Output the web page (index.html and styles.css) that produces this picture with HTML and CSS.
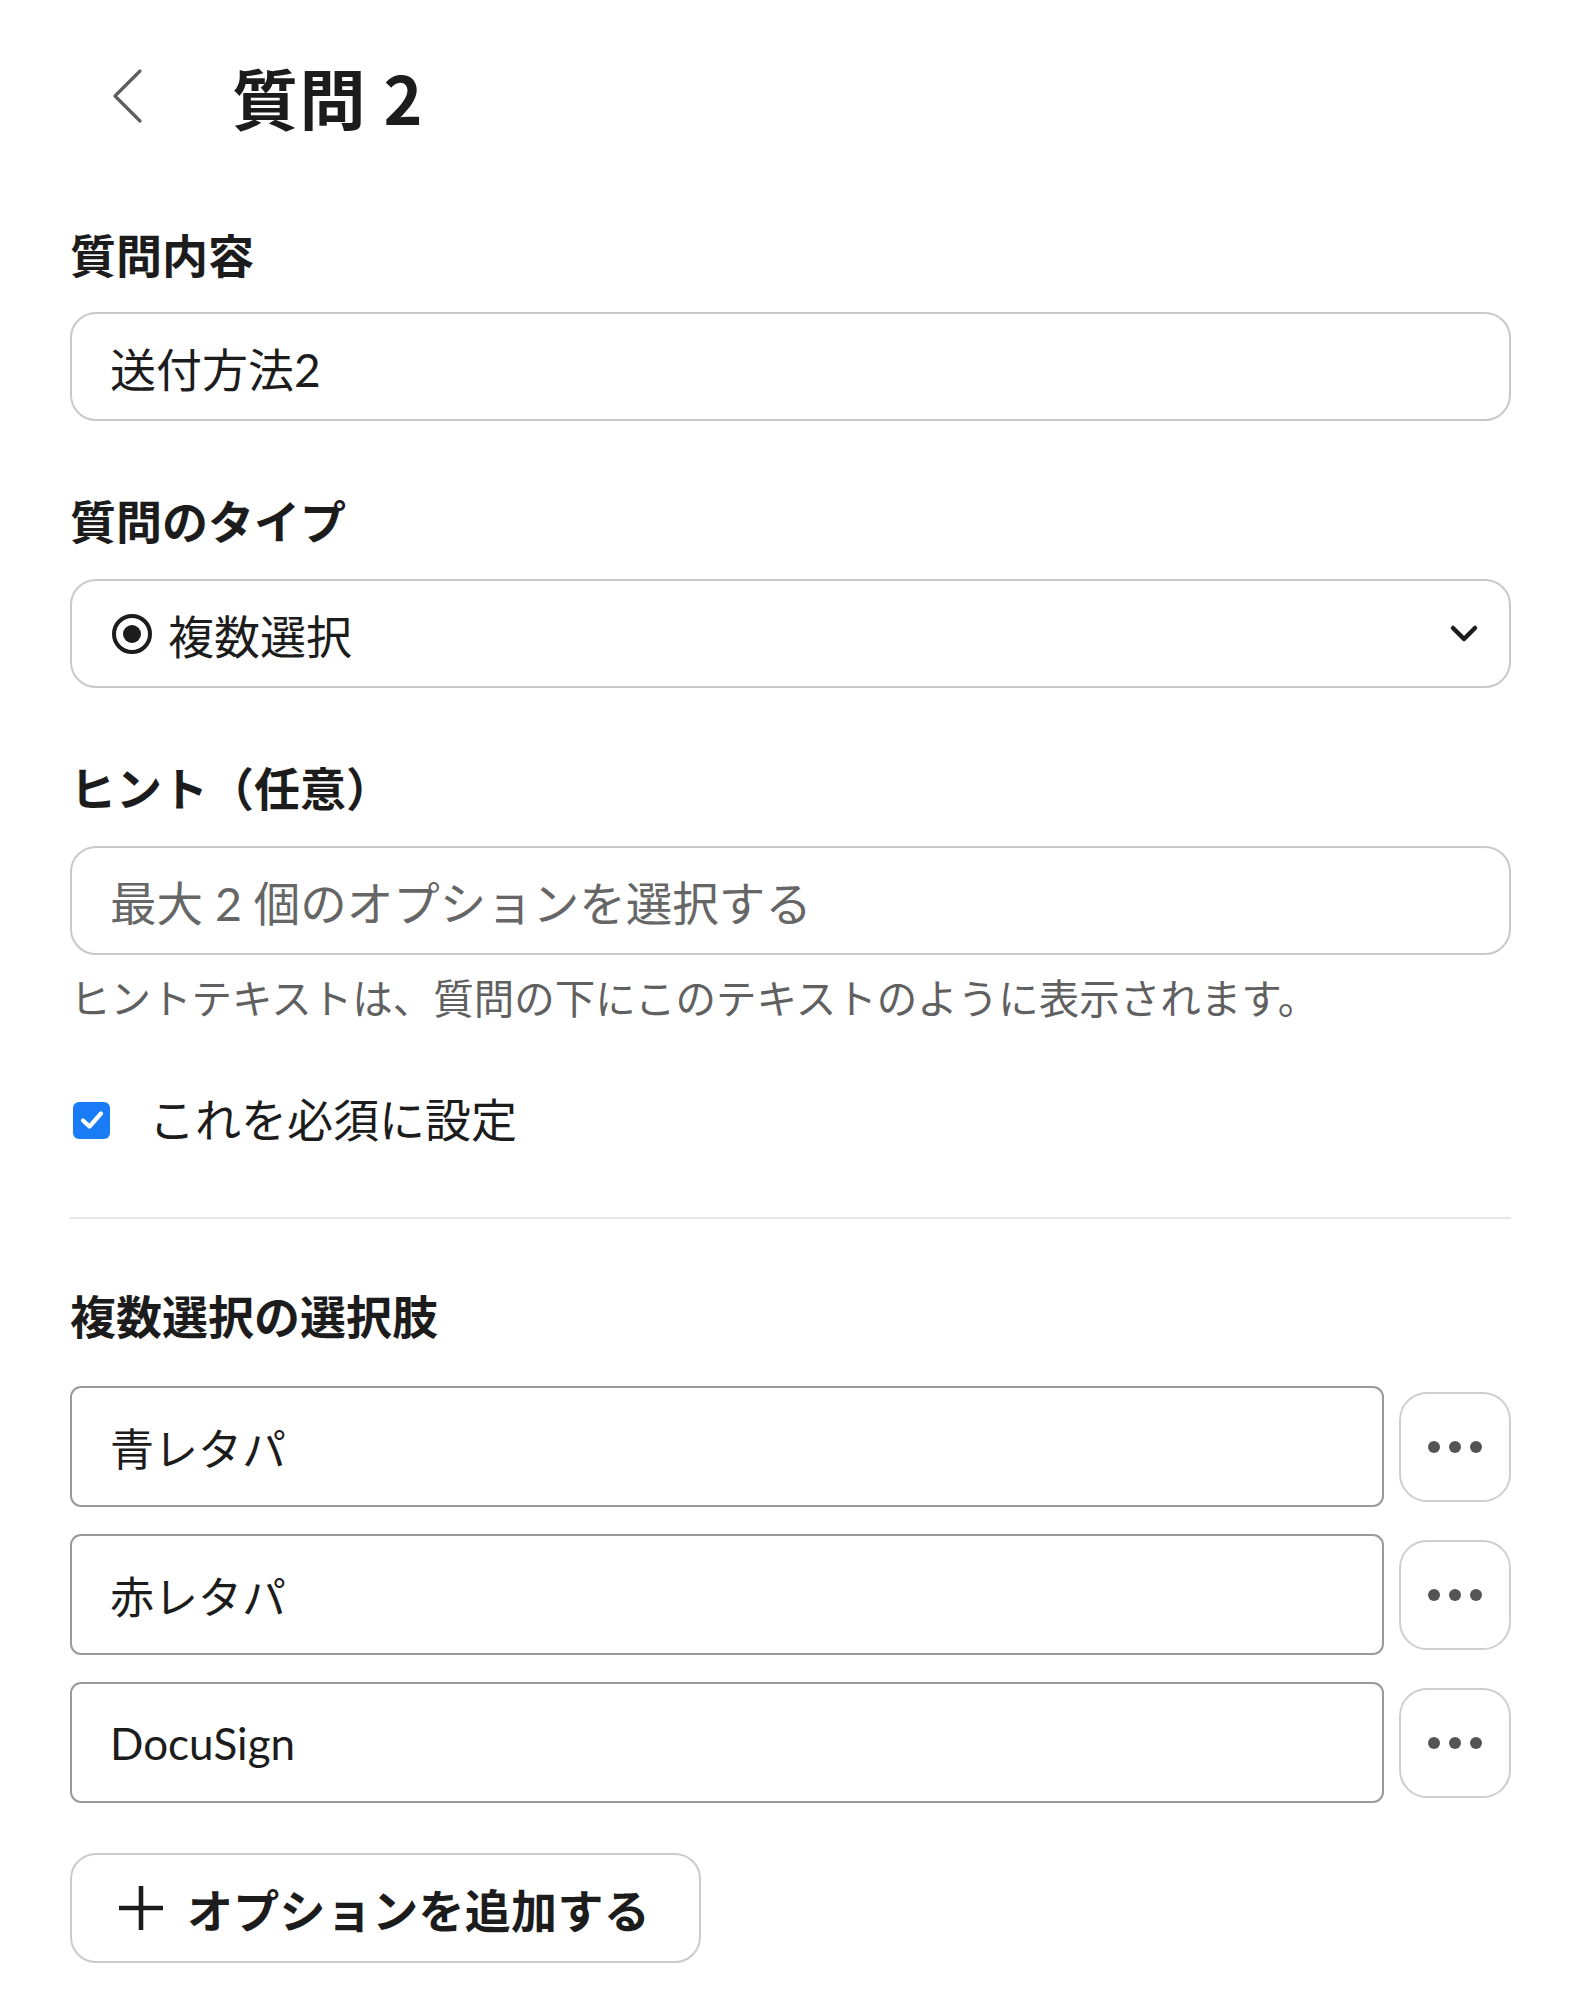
FILE: index.html
```html
<!DOCTYPE html>
<html lang="ja">
<head>
<meta charset="utf-8">
<title>質問 2</title>
<link rel="stylesheet" href="styles.css">
</head>
<body>
<header class="header">
  <button class="back" aria-label="戻る">
    <svg width="34" height="56" viewBox="0 0 34 56"><path d="M30 3 L5 28 L30 53" fill="none" stroke="#5e5e5e" stroke-width="3.2" stroke-linecap="round" stroke-linejoin="round"/></svg>
  </button>
  <h1 class="title">質問 2</h1>
</header>
<main class="content">
  <div class="label label-first">質問内容</div>
  <div class="field field-input">送付方法2</div>

  <div class="label">質問のタイプ</div>
  <div class="field field-select">
    <span class="radio"><span class="radio-dot"></span></span>
    <span class="select-text">複数選択</span>
    <svg class="chev" width="30" height="22" viewBox="0 0 30 22"><path d="M4 5 L15 16 L26 5" fill="none" stroke="#1d1c1d" stroke-width="4.5" stroke-linecap="round" stroke-linejoin="round"/></svg>
  </div>

  <div class="label">ヒント（任意）</div>
  <div class="field field-input placeholder">最大 2 個のオプションを選択する</div>
  <div class="help">ヒントテキストは、質問の下にこのテキストのように表示されます。</div>

  <div class="check-row">
    <span class="checkbox">
      <svg width="24" height="20" viewBox="0 0 24 20"><path d="M3 10.5 L9.5 16.5 L21 3.5" fill="none" stroke="#fff" stroke-width="4.2" stroke-linecap="round" stroke-linejoin="round"/></svg>
    </span>
    <span class="check-label">これを必須に設定</span>
  </div>

  <hr class="divider">

  <div class="label label-options">複数選択の選択肢</div>
  <div class="options">
    <div class="option-row">
      <div class="option-input">青レタパ</div>
      <button class="more" aria-label="その他"><span></span><span></span><span></span></button>
    </div>
    <div class="option-row">
      <div class="option-input">赤レタパ</div>
      <button class="more" aria-label="その他"><span></span><span></span><span></span></button>
    </div>
    <div class="option-row">
      <div class="option-input">DocuSign</div>
      <button class="more" aria-label="その他"><span></span><span></span><span></span></button>
    </div>
  </div>

  <button class="add">
    <svg width="46" height="46" viewBox="0 0 46 46"><path d="M23 1 V45 M1 23 H45" stroke="#1d1c1d" stroke-width="4.6" fill="none"/></svg>
    <span>オプションを追加する</span>
  </button>
</main>
</body>
</html>
```

FILE: styles.css
```css
html, body {
  margin: 0;
  padding: 0;
  background: #ffffff;
}

body {
  font-family: Lato, "Noto Sans CJK JP", sans-serif;
  color: #1d1c1d;
  width: 1578px;
}

.header {
  display: flex;
  align-items: center;
  height: 96px;
  padding: 48px 0 0 110px;
}

.back {
  border: 0;
  background: none;
  padding: 0;
  width: 34px;
  height: 56px;
  display: flex;
  align-items: center;
  justify-content: center;
  margin-right: 88px;
}

.title {
  margin: 0;
  font-size: 66px;
  line-height: 96px;
  font-weight: 700;
  font-family: "Noto Sans CJK JP", sans-serif;
  letter-spacing: 1.5px;
}

.content {
  padding: 0 67px 0 70px;
  display: flex;
  flex-direction: column;
  align-items: flex-start;
}

.label {
  font-family: "Noto Sans CJK JP", sans-serif;
  font-size: 46px;
  line-height: 60px;
  font-weight: 700;
  margin-top: 68px;
  margin-bottom: 30px;
}

.label-first {
  margin-top: 79px;
  margin-bottom: 29px;
}

.field {
  box-sizing: border-box;
  width: 100%;
  height: 109px;
  border: 2px solid #c9c9c9;
  border-radius: 26px;
  display: flex;
  align-items: center;
  padding: 0 30px 0 38px;
  font-size: 46px;
}

.placeholder {
  color: #666666;
  font-size: 46.5px;
}

.radio {
  box-sizing: border-box;
  width: 40px;
  height: 40px;
  border: 4px solid #1d1c1d;
  border-radius: 50%;
  display: flex;
  align-items: center;
  justify-content: center;
  margin-right: 16px;
  margin-left: 2px;
}

.radio-dot {
  width: 18px;
  height: 18px;
  border-radius: 50%;
  background: #1d1c1d;
}

.select-text {
  flex: 1;
}

.chev {
  display: block;
}

.help {
  margin-top: 18px;
  font-size: 40.5px;
  line-height: 52px;
  color: #616061;
}

.check-row {
  margin-top: 65px;
  height: 60px;
  display: flex;
  align-items: center;
}

.checkbox {
  box-sizing: border-box;
  width: 37px;
  height: 37px;
  border-radius: 6px;
  background: #1a7bf6;
  display: flex;
  align-items: center;
  justify-content: center;
  margin-left: 3px;
  margin-right: 39px;
}

.checkbox svg {
  display: block;
}

.check-label {
  font-size: 46px;
  line-height: 60px;
}

.divider {
  width: 100%;
  margin: 67px 0 0 0;
  border: 0;
  height: 2px;
  background: #e6e6e6;
}

.label-options {
  margin-top: 65px;
  margin-bottom: 42px;
}

.options {
  width: 100%;
  display: flex;
  flex-direction: column;
  gap: 27px;
}

.option-row {
  display: flex;
  align-items: center;
  gap: 15px;
}

.option-input {
  box-sizing: border-box;
  flex: 1;
  height: 121px;
  border: 2px solid #9a9a9a;
  border-radius: 11px;
  display: flex;
  align-items: center;
  padding-left: 38px;
  font-size: 44px;
}

.more {
  box-sizing: border-box;
  width: 112px;
  height: 110px;
  border: 2px solid #cfcfcf;
  border-radius: 28px;
  background: #fff;
  display: flex;
  align-items: center;
  justify-content: center;
  gap: 9px;
  padding: 0;
}

.more span {
  width: 12px;
  height: 12px;
  border-radius: 50%;
  background: #555555;
}

.add {
  margin-top: 50px;
  box-sizing: border-box;
  height: 110px;
  width: 631px;
  border: 2px solid #cbcbcb;
  border-radius: 26px;
  background: #fff;
  display: flex;
  align-items: center;
  gap: 23px;
  padding: 0 0 0 46px;
  font-family: "Noto Sans CJK JP", sans-serif;
  font-size: 46px;
  font-weight: 700;
  color: #1d1c1d;
  letter-spacing: 0.3px;
}

.add svg {
  display: block;
  flex: none;
}
```
